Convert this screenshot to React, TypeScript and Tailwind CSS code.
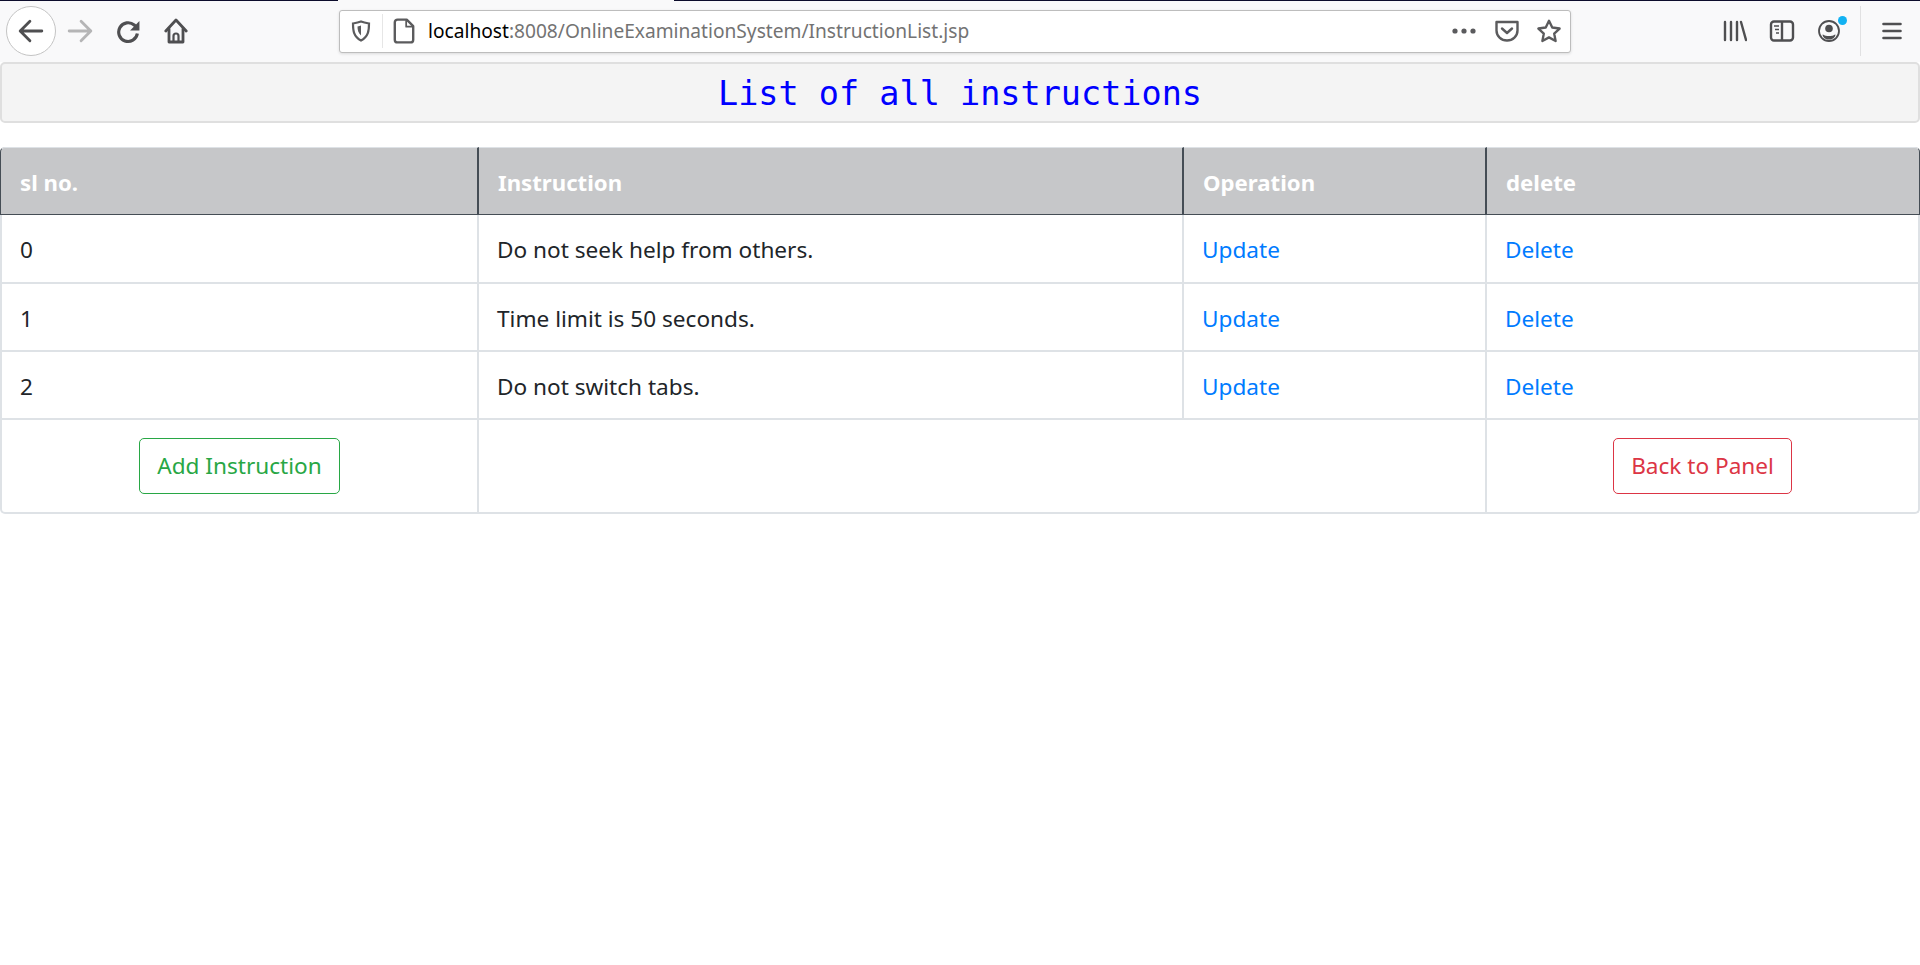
const font = "font-['Noto_Sans',sans-serif]";

const rows = [
  { id: 0, text: 'Do not seek help from others.', height: 'h-[69px]' },
  { id: 1, text: 'Time limit is 50 seconds.', height: 'h-[68px]' },
  { id: 2, text: 'Do not switch tabs.', height: 'h-[68px]' },
];

function IconButton({ className = 'w-[48px]', children }: { className?: string; children: React.ReactNode }) {
  return <div className={`flex h-[50px] shrink-0 items-center justify-center ${className}`}>{children}</div>;
}

function Toolbar() {
  return (
    <div className="relative flex h-[62px] items-center bg-[#f9f9fa] pl-[6px]">
      <div className="absolute left-0 top-0 h-px w-[338px] bg-[#0c0c2c]" />
      <div className="absolute left-[674px] right-0 top-0 h-px bg-[#0c0c2c]" />
      <div className="flex h-[50px] w-[50px] shrink-0 items-center justify-center rounded-full border border-[#c4c4c4] bg-white">
        <svg width="26" height="26" viewBox="0 0 24 24" fill="none" stroke="#4f4f51" strokeWidth="2.6" strokeLinecap="round" strokeLinejoin="round">
          <path d="M22 12H2.500M11 3l-9 9 9 9" />
        </svg>
      </div>
      <IconButton className="w-[48px]">
        <svg width="26" height="26" viewBox="0 0 24 24" fill="none" stroke="#b5b5b6" strokeWidth="2.6" strokeLinecap="round" strokeLinejoin="round">
          <path d="M2 12h20M13 3l9 9-9 9" />
        </svg>
      </IconButton>
      <IconButton className="w-[48px]">
        <svg width="25" height="25" viewBox="0 0 24 24" fill="none" stroke="#4f4f51" strokeWidth="3" strokeLinejoin="round">
          <path d="M20.500 14a9 9 0 1 1-3-8.200L20 8" />
          <path d="M22.500 2v9h-9l9-9Z" fill="#4f4f51" stroke="none" />
        </svg>
      </IconButton>
      <IconButton className="w-[48px]">
        <svg width="24" height="26" viewBox="0 0 24 26" fill="none" stroke="#4f4f51" strokeWidth="2.800" strokeLinecap="round" strokeLinejoin="round">
          <path d="M1.800 13 12 2l10.200 11" />
          <path d="M5 11v13h14V11" />
          <path d="M9.500 24v-6a2.500 2.500 0 0 1 5 0v6" strokeWidth="2.200" />
        </svg>
      </IconButton>

      <div className="ml-[139px] flex h-[43px] w-[1232px] shrink-0 items-center rounded-[3px] border border-[#bdbdbd] bg-white shadow-[0_1px_3px_rgba(0,0,0,0.12)]">
        <div className="flex w-[42px] shrink-0 items-center justify-center">
          <svg width="20" height="22" viewBox="0 0 20 22" fill="none" stroke="#5b5b5d" strokeWidth="2.200">
            <path d="M2 3.500c3-.5 5.500-1 8-2 2.500 1 5 1.500 8 2 0 7-.5 13-8 17-7.500-4-8-10-8-17Z" />
            <path d="M10 5.500c1 .5 2 .7 3.500.9 0 3.500-.8 6.500-3.500 9V5.500Z" fill="#5b5b5d" stroke="none" transform="matrix(-1 0 0 1 20 0)" />
          </svg>
        </div>
        <div className="h-[34px] w-px shrink-0 bg-[#e6e6e6]" />
        <div className="flex w-[42px] shrink-0 items-center justify-center">
          <svg width="22" height="26" viewBox="0 0 20 24" fill="none" stroke="#5b5b5d" strokeWidth="2.200" strokeLinejoin="round">
            <path d="M12.500 1.500H4a2.500 2.500 0 0 0-2.500 2.500v16A2.500 2.500 0 0 0 4 22.500h12a2.500 2.500 0 0 0 2.500-2.500V7.500l-6-6Z" />
            <path d="M12 2v6h6" strokeWidth="1.600" />
          </svg>
        </div>
        <div className={`ml-[3px] grow pt-[1px] text-[19.150px] leading-none text-[#737373] ${font}`}>
          <span className="text-black">localhost</span>:8008/OnlineExaminationSystem/InstructionList.jsp
        </div>
        <div className="flex items-center">
          <IconButton className="w-[44px]">
            <svg width="24" height="6" viewBox="0 0 24 6" fill="#5b5b5d">
              <circle cx="3" cy="3" r="2.600" />
              <circle cx="12" cy="3" r="2.600" />
              <circle cx="21" cy="3" r="2.600" />
            </svg>
          </IconButton>
          <IconButton className="w-[42px]">
            <svg width="24" height="24" viewBox="0 0 24 24" fill="none" stroke="#5b5b5d" strokeWidth="2.400" strokeLinecap="round" strokeLinejoin="round">
              <path d="M1.500 3h21v8.500a10.500 10 0 0 1-21 0V3Z" />
              <path d="m7 9.500 5 4.500 5-4.500" />
            </svg>
          </IconButton>
          <IconButton className="w-[42px]">
            <svg width="26" height="26" viewBox="0 0 24 24" fill="none" stroke="#5b5b5d" strokeWidth="2.200" strokeLinejoin="round">
              <path d="m12 2.500 3 6.300 6.800.9-5 4.700 1.300 6.800-6.100-3.300-6.100 3.300 1.300-6.800-5-4.700 6.800-.9 3-6.300Z" />
            </svg>
          </IconButton>
        </div>
      </div>

      <div className="ml-[140px] flex items-center">
        <IconButton className="w-[47px]">
          <svg width="24" height="22" viewBox="0 0 24 22" fill="none" stroke="#4f4f51" strokeWidth="2.400" strokeLinecap="round">
            <path d="M2 2v18M8 2v18M14 2v18M18 2l5 18" />
          </svg>
        </IconButton>
        <IconButton className="w-[47px]">
          <svg width="26" height="24" viewBox="0 0 26 24" fill="none" stroke="#4f4f51" strokeWidth="2.400" strokeLinejoin="round">
            <rect x="2" y="2.500" width="22" height="19" rx="3" />
            <path d="M13 3v18" />
            <path d="M5 7h5M6 10.500h4M7 14h3" strokeWidth="1.600" />
          </svg>
        </IconButton>
        <IconButton className="relative w-[47px]">
          <svg width="24" height="24" viewBox="0 0 24 24" fill="none" stroke="#4f4f51" strokeWidth="1.800">
            <circle cx="12" cy="12" r="10" />
            <circle cx="12" cy="9.500" r="3.800" fill="#4f4f51" stroke="none" />
            <path d="M5.500 15.500c3 1 3 1.500 6.500 1.500s3.500-.5 6.500-1.500c-.5 3.500-3 5-6.500 5s-6-1.500-6.500-5Z" fill="#4f4f51" stroke="none" />
          </svg>
          <span className="absolute left-[33px] top-[10px] h-[9px] w-[9px] rounded-full bg-[#12b2f2]" />
        </IconButton>
        <div className="ml-[8px] h-[50px] w-px bg-[#e1e1e2]" />
        <IconButton className="ml-[7px] w-[48px]">
          <svg width="20" height="18" viewBox="0 0 20 18" fill="none" stroke="#4f4f51" strokeWidth="2.600" strokeLinecap="round">
            <path d="M1.500 2h17M1.500 9h17M1.500 16h17" />
          </svg>
        </IconButton>
      </div>
    </div>
  );
}

export default function App() {
  const th = 'border-r border-b border-[#454d55] px-[19px] pt-[3px] text-left align-middle text-[22.200px] font-bold text-white';
  const td = 'border-r-2 border-b-2 border-[#dee2e6] px-[18px] align-middle text-[22.600px] font-normal text-[#212529]';
  return (
    <div className={`min-h-[965px] bg-white ${font}`}>
      <Toolbar />
      <div className="flex h-[61px] items-center justify-center rounded-[5px] border-2 border-[#dfdfdf] bg-[#f4f4f4]">
        <h1 className="pt-[2px] font-['DejaVu_Sans_Mono',monospace] text-[33.500px] font-normal leading-none text-[#0000ff]">
          List of all instructions
        </h1>
      </div>
      <table className="mt-[24px] w-full table-fixed border-separate border-spacing-0">
        <colgroup>
          <col className="w-[479px]" />
          <col className="w-[705px]" />
          <col className="w-[303px]" />
          <col />
        </colgroup>
        <thead>
          <tr className="h-[68px] bg-[#c6c7c9]">
            <th className={`${th} rounded-tl-[5px] border-l border-t border-t-[#dee2e6] border-l-[#454d55] border-r-2`}>sl no.</th>
            <th className={`${th} border-t border-t-[#dee2e6] border-r-2`}>Instruction</th>
            <th className={`${th} border-t border-t-[#dee2e6] border-r-2`}>Operation</th>
            <th className={`${th} rounded-tr-[5px] border-t border-t-[#dee2e6]`}>delete</th>
          </tr>
        </thead>
        <tbody>
          {rows.map((row) => (
            <tr key={row.id} className={row.height}>
              <td className={`${td} border-l-2 pt-[3px]`}>{row.id}</td>
              <td className={`${td} pt-[3px]`}>{row.text}</td>
              <td className={`${td} pt-[3px]`}>
                <a className="text-[#007bff]">Update</a>
              </td>
              <td className={`${td} pt-[3px]`}>
                <a className="text-[#007bff]">Delete</a>
              </td>
            </tr>
          ))}
          <tr className="h-[94px]">
            <td className={`${td} rounded-bl-[5px] border-l-2 text-center`}>
              <button className="h-[56px] w-[201px] rounded-[5px] border border-[#28a745] text-[#28a745]">Add Instruction</button>
            </td>
            <td colSpan={2} className={td} />
            <td className={`${td} rounded-br-[5px] text-center`}>
              <button className="h-[56px] w-[179px] rounded-[5px] border border-[#dc3545] text-[#dc3545]">Back to Panel</button>
            </td>
          </tr>
        </tbody>
      </table>
    </div>
  );
}
